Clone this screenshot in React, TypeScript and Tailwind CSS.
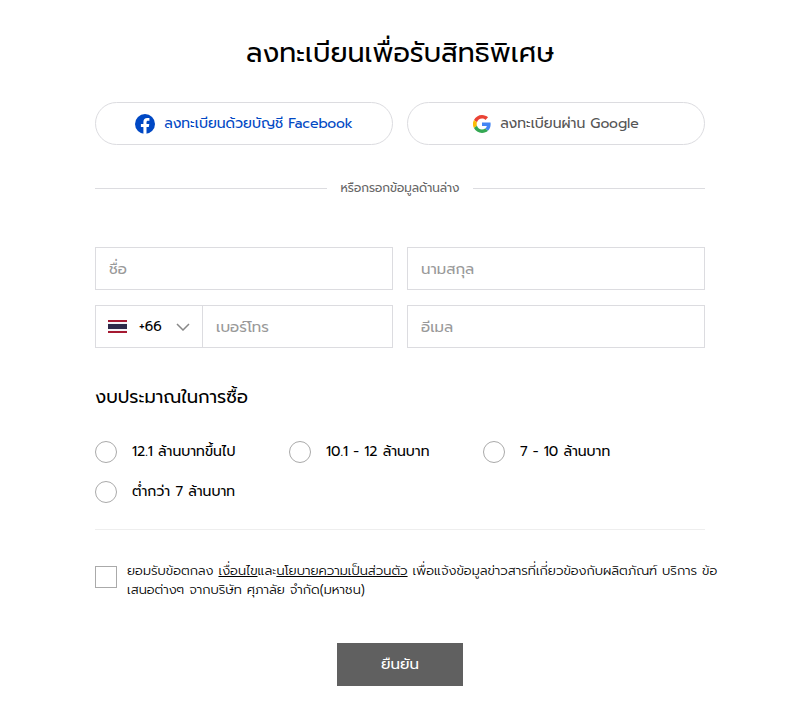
import React, { useState } from "react";

const budgets = [
  "12.1 ล้านบาทขึ้นไป",
  "10.1 - 12 ล้านบาท",
  "7 - 10 ล้านบาท",
  "ต่ำกว่า 7 ล้านบาท",
];

const fieldClass =
  "h-[43px] w-full min-w-0 border border-[#dcdce0] bg-white px-[13px] text-[15px] text-black placeholder:text-[#999] outline-none";

function FacebookIcon() {
  return (
    <svg className="h-5 w-5 shrink-0" viewBox="0 0 20 20" aria-hidden="true">
      <circle cx="10" cy="10" r="10" fill="#0048c4" />
      <path
        fill="#fff"
        d="M8.400 20v-7H5.900v-3h2.500V7.900c0-2.600 1.500-4 3.800-4 .8 0 1.600.1 2.200.2v2.600h-1.300c-1.200 0-1.600.7-1.600 1.500V10h2.800l-.5 3h-2.300v7z"
      />
    </svg>
  );
}

function GoogleIcon() {
  return (
    <svg className="h-[18px] w-[18px] shrink-0" viewBox="0 0 48 48" aria-hidden="true">
      <path fill="#EA4335" d="M24 9.5c3.500 0 6.700 1.200 9.200 3.600l6.900-6.900C35.900 2.400 30.500 0 24 0 14.600 0 6.500 5.400 2.600 13.200l8 6.200C12.400 13.700 17.700 9.500 24 9.500z" />
      <path fill="#4285F4" d="M47 24.600c0-1.600-.2-3.100-.4-4.600H24v9h12.900c-.6 3-2.200 5.500-4.700 7.200l7.700 6C44.400 38 47 31.800 47 24.600z" />
      <path fill="#FBBC05" d="M10.500 28.600a14.500 14.500 0 0 1 0-9.200l-8-6.200a24 24 0 0 0 0 21.600z" />
      <path fill="#34A853" d="M24 48c6.500 0 11.900-2.100 15.900-5.800l-7.700-6c-2.200 1.500-4.900 2.300-8.200 2.300-6.300 0-11.600-4.200-13.500-9.900l-8 6.200C6.500 42.600 14.600 48 24 48z" />
    </svg>
  );
}

function ThaiFlag() {
  return (
    <svg className="h-[13px] w-[19px] shrink-0" viewBox="0 0 19 13" aria-hidden="true">
      <path fill="#a51931" d="M0 0h19v13H0z" />
      <path fill="#f4f5f8" d="M0 2h19v9H0z" />
      <path fill="#2d2a4a" d="M0 4h19v5H0z" />
    </svg>
  );
}

export default function App() {
  const [budget, setBudget] = useState("");

  return (
    <main className="bg-white px-[95px] pt-[35px] pb-5 font-['Prompt','Noto_Sans_Thai','Noto_Sans',sans-serif] text-black">
      <h1 className="text-center text-[27px] leading-9">ลงทะเบียนเพื่อรับสิทธิพิเศษ</h1>

      <div className="mt-[31px] grid grid-cols-2 gap-[14px]">
        <button type="button" className="flex h-[43px] items-center justify-center gap-[9px] rounded-full border border-[#dcdce0] text-sm text-[#0048c4]">
          <FacebookIcon />
          ลงทะเบียนด้วยบัญชี Facebook
        </button>
        <button type="button" className="flex h-[43px] items-center justify-center gap-[9px] rounded-full border border-[#dcdce0] text-sm text-[#555]">
          <GoogleIcon />
          ลงทะเบียนผ่าน Google
        </button>
      </div>

      <div className="mt-[33px] flex items-center gap-[13px] text-xs leading-5 text-[#666]">
        <span className="h-px flex-1 bg-[#dcdce0]" />
        หรือกรอกข้อมูลด้านล่าง
        <span className="h-px flex-1 bg-[#dcdce0]" />
      </div>

      <form className="mt-[49px]" onSubmit={(e) => e.preventDefault()}>
        <div className="grid grid-cols-2 gap-x-[14px] gap-y-[15px]">
          <input className={fieldClass} aria-label="ชื่อ" placeholder="ชื่อ" />
          <input className={fieldClass} aria-label="นามสกุล" placeholder="นามสกุล" />
          <div className="flex">
            <button type="button" aria-label="+66" className="flex h-[43px] w-[108px] shrink-0 items-center border border-[#dcdce0] px-3 text-sm">
              <ThaiFlag />
              <span className="ml-3 flex-1 text-left">+66</span>
              <svg className="h-[8px] w-[14px]" viewBox="0 0 14 8" fill="none" stroke="#888" strokeWidth="1.5">
                <path d="M1 1l6 6 6-6" />
              </svg>
            </button>
            <input className={`${fieldClass} border-l-0`} type="tel" aria-label="เบอร์โทร" placeholder="เบอร์โทร" />
          </div>
          <input className={fieldClass} type="email" aria-label="อีเมล" placeholder="อีเมล" />
        </div>

        <fieldset className="mt-[35px]">
          <legend className="text-lg leading-7">งบประมาณในการซื้อ</legend>
          <div className="mt-[29px] grid grid-cols-[repeat(3,194px)] gap-y-4">
            {budgets.map((label) => (
              <label key={label} className="flex h-6 items-center gap-[15px] text-sm whitespace-nowrap">
                <input
                  type="radio"
                  name="budget"
                  checked={budget === label}
                  onChange={() => setBudget(label)}
                  className="h-[22px] w-[22px] shrink-0 appearance-none rounded-full border border-[#aaa] checked:border-[6px]"
                />
                {label}
              </label>
            ))}
          </div>
        </fieldset>

        <div className="mt-[25px] border-t border-[#eee] pt-[31px]">
          <div className="-mr-4 flex items-start gap-[10px] text-[13px] leading-[19px] font-light">
            <input id="consent" type="checkbox" className="mt-[5px] h-[22px] w-[22px] shrink-0 appearance-none border border-[#aaa] checked:bg-[#606060]" />
            <label htmlFor="consent">
              ยอมรับข้อตกลง <a href="#terms" className="underline">เงื่อนไข</a>และ<a href="#privacy" className="underline">นโยบายความเป็นส่วนตัว</a> เพื่อแจ้งข้อมูลข่าวสารที่เกี่ยวข้องกับผลิตภัณฑ์ บริการ ข้อ<wbr />เสนอต่างๆ จากบริษัท ศุภาลัย จำกัด(มหาชน)
            </label>
          </div>
        </div>

        <button type="submit" className="mx-auto mt-11 block h-[43px] w-[126px] bg-[#606060] text-[15px] text-white">
          ยืนยัน
        </button>
      </form>
    </main>
  );
}
